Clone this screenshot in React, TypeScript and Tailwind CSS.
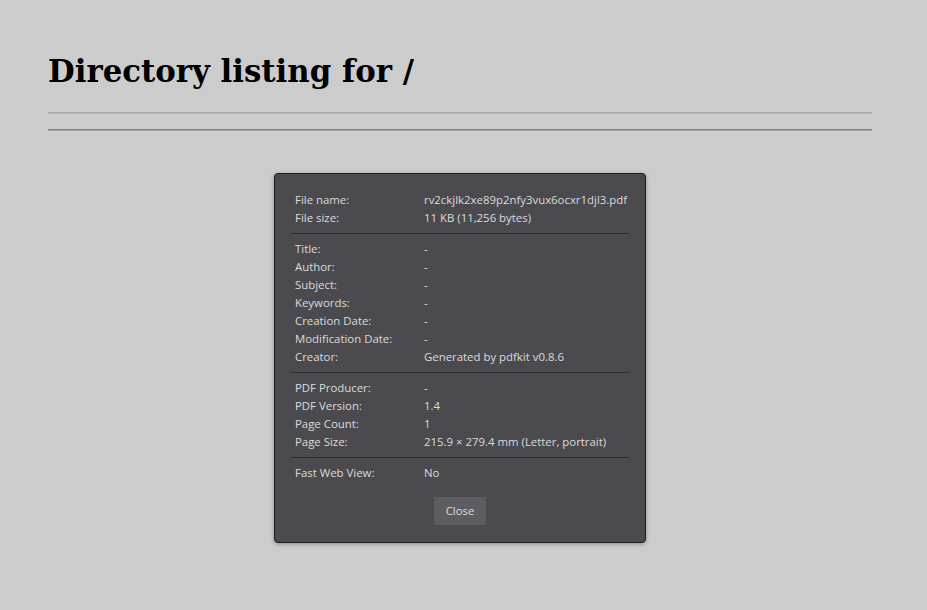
const rows1 = [
  ["File name:", "rv2ckjlk2xe89p2nfy3vux6ocxr1djl3.pdf"],
  ["File size:", "11 KB (11,256 bytes)"],
]
const rows2 = [
  ["Title:", "-"],
  ["Author:", "-"],
  ["Subject:", "-"],
  ["Keywords:", "-"],
  ["Creation Date:", "-"],
  ["Modification Date:", "-"],
  ["Creator:", "Generated by pdfkit v0.8.6"],
]
const rows3 = [
  ["PDF Producer:", "-"],
  ["PDF Version:", "1.4"],
  ["Page Count:", "1"],
  ["Page Size:", "215.9 × 279.4 mm (Letter, portrait)"],
]
const rows4 = [["Fast Web View:", "No"]]

const Group = ({ rows }: { rows: string[][] }) => (
  <div className="flex flex-col">
    {rows.map(([label, value]) => (
      <div key={label} className="flex h-[18px] items-center pl-1 pt-[2px]">
        <span className="w-[129px] shrink-0">{label}</span>
        <span className="whitespace-nowrap">{value}</span>
      </div>
    ))}
  </div>
)

const Sep = () => <div className="mt-[7px] mb-[5px] h-px bg-[#2c2c30]" />

export default function App() {
  return (
    <div className="min-h-screen bg-[#cccccc] pt-[53px] font-['DejaVu_Serif',serif]">
      <div className="ml-[48px] w-[824px]">
        <h1 className="text-[30.8px] font-bold leading-[37px] text-black">Directory listing for /</h1>
        <div className="mt-[22px] border-t border-t-[#a4a4a4] border-b border-b-[#bdbdbd]" />
        <div className="mt-[15px] border-t border-t-[#7e7e7e] border-b border-b-[#a6a6a6]" />
      </div>

      <div className="ml-[274px] mt-[42px] w-[372px] rounded-[4px] border border-[#1e1e21] bg-[#4a4a4f] px-4 pt-4 pb-[17px] font-['Open_Sans',sans-serif] text-[11.4px] text-[#dcdcdc] shadow-[0_1px_4px_rgba(0,0,0,0.3)]">
        <Group rows={rows1} />
        <Sep />
        <Group rows={rows2} />
        <Sep />
        <Group rows={rows3} />
        <Sep />
        <Group rows={rows4} />
        <div className="mt-4 flex justify-center">
          <button className="h-[28px] w-[52px] rounded-[2px] bg-[#5c5c61] text-[11.4px] text-[#dcdcdc]">Close</button>
        </div>
      </div>
    </div>
  )
}
